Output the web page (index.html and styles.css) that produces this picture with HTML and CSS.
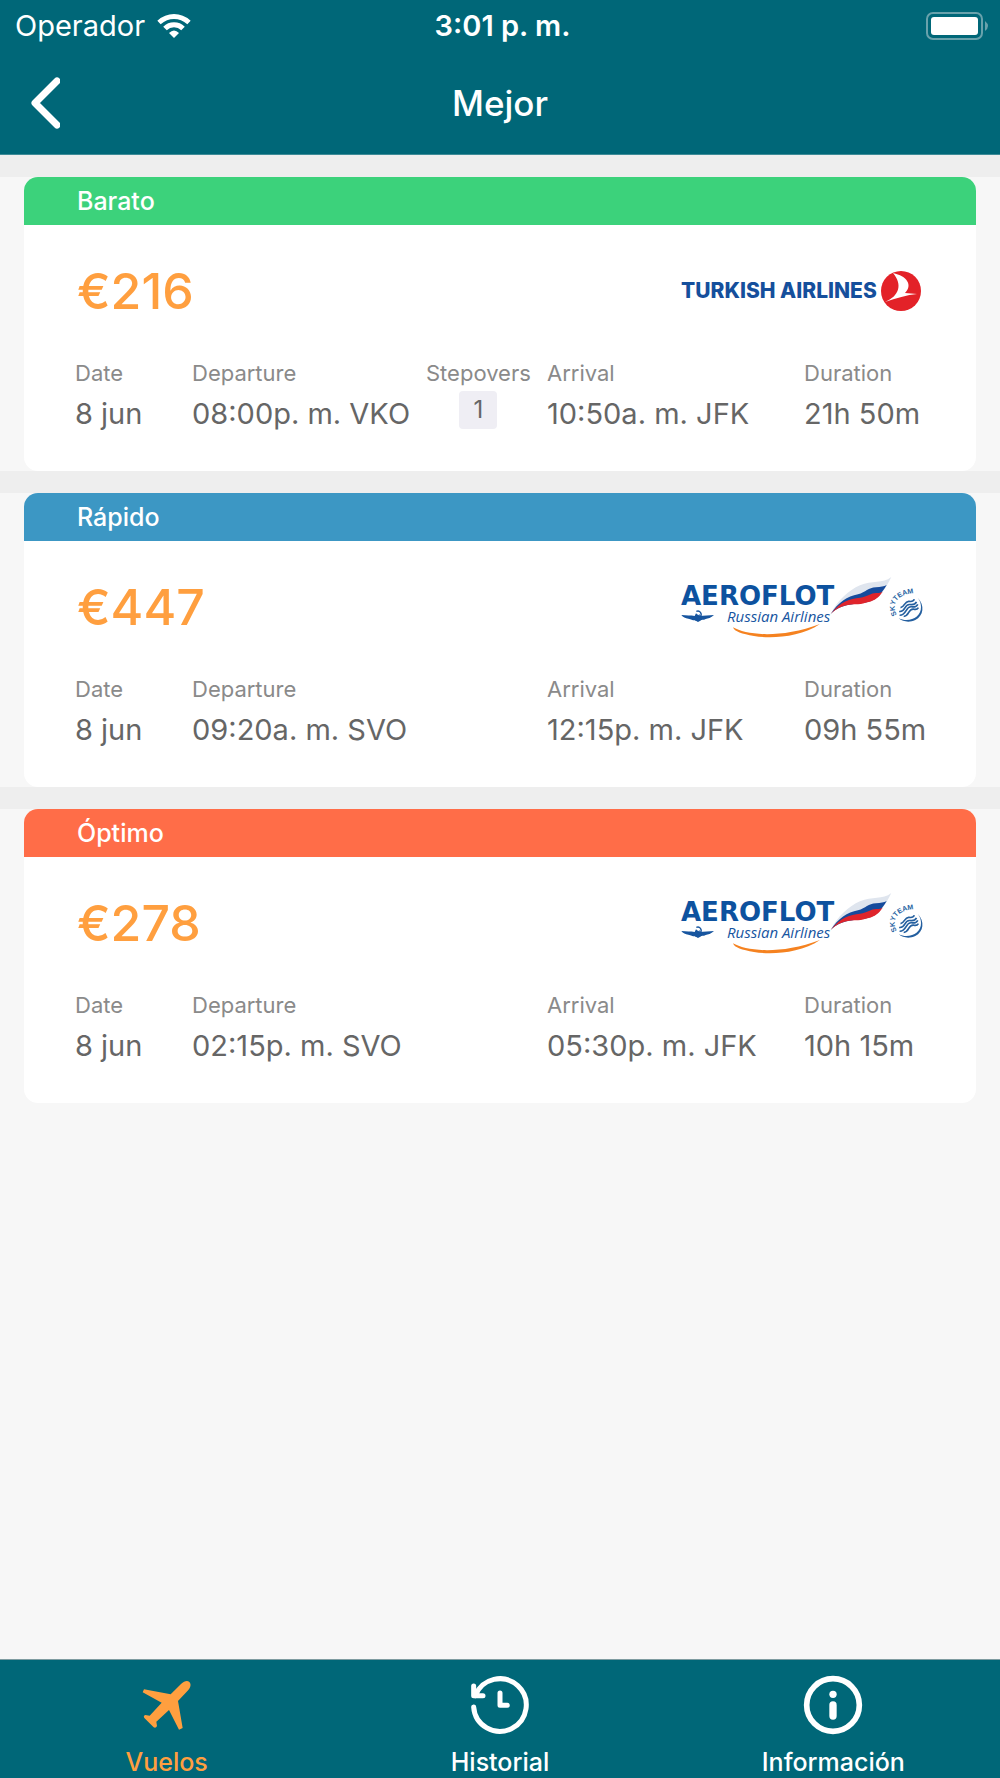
FILE: index.html
```html
<!DOCTYPE html>
<html lang="es">
<head>
<meta charset="utf-8">
<meta name="viewport" content="width=device-width, initial-scale=1">
<title>Mejor</title>
<link rel="stylesheet" href="styles.css">
</head>
<body>
<svg class="defs" aria-hidden="true">
  <symbol id="aeroflot" viewBox="0 0 280 90">
    <g transform="scale(.33333)">
      <path d="M64 168C80 170 92 168 104 171L108 163L118 171L162 168C153 177 144 178 137 180C130 184 125 181 121 185L114 189L105 184C96 184 94 180 85 179C76 177 69 175 64 168Z" fill="#17559f"/>
      <path d="M109 157C119 153 128 163 121 174M106 184L119 167" fill="none" stroke="#17559f" stroke-width="4"/>
      <path d="M219 205C260 229 363 239 480 195C420 236 331 239 282 231C246 225 223 218 219 205Z" fill="#f58220"/>
      <path d="M512 165C532 125 566 94 600 79C636 62 668 76 694 54C676 92 654 122 620 130C590 137 545 132 512 165Z" fill="#dfe5ee"/>
      <path d="M512 165C534 131 562 112 594 106C618 100 624 86 648 85C662 84 672 82 680 78C664 104 650 124 620 130C590 137 545 132 512 165Z" fill="#164b9c"/>
      <path d="M512 165C542 126 570 119 600 116C624 113 634 101 650 102C658 102 664 100 668 98C656 116 644 124 626 129C612 132 606 136 594 136C568 136 540 138 512 165Z" fill="#df242b"/>
      <path d="M773 116C795 139 791 170 766 183C747 192 729 188 716 178C748 193 784 174 783 144C783 134 780 125 773 116Z" fill="#245f9f"/>
      <path transform="rotate(-22 746 148)" d="M716 146C734 157 738 129 754 139C762 144 769 144 775 139M713 157C733 166 740 137 756 147C764 152 770 152 776 147M723 165C740 171 744 147 759 156C764 160 770 160 774 157M724 137C736 141 743 122 755 129C763 134 768 133 772 129" fill="none" stroke="#245f9f" stroke-width="5"/>
    </g>
  </symbol>
  <path id="sky-arc" d="M237 56C231 46 236 34 258 34" fill="none"/>
  <symbol id="turkish" viewBox="0 0 280 90">
    <circle cx="241" cy="48" r="20" fill="#e32228"/>
    <path d="M233 30C247 33 253 42 245 50L257 51C247 52 236 55 225 59C239 53 243 42 233 30Z" fill="#fff"/>
  </symbol>
</svg>

<header class="top">
  <div class="status">
    <div class="carrier">
      <span>Operador</span>
      <svg width="34" height="26" viewBox="0 0 34 26" aria-hidden="true">
        <path d="M2 9.500C11 1.500 23 1.500 32 9.500M8 15.500C13 10.500 21 10.500 26 15.500" fill="none" stroke="#fff" stroke-width="5"/>
        <path d="M12 20Q17 15 22 20L17 25Z" fill="#fff"/>
      </svg>
    </div>
    <time class="clock">3:01 p. m.</time>
    <svg class="battery" width="64" height="28" viewBox="0 0 64 28" role="img" aria-label="Batería">
      <rect x="1" y="1" width="55" height="26" rx="6" fill="none" stroke="#69a2ac" stroke-width="2"/>
      <rect x="5" y="5" width="47" height="18" rx="3" fill="#fff"/>
      <path d="M59 9Q65 14 59 19Z" fill="#69a2ac"/>
    </svg>
  </div>
  <div class="titlebar">
    <button class="back" type="button" aria-label="Atrás">
      <svg width="30" height="52" viewBox="0 0 30 52" aria-hidden="true"><path d="M27 4L5 26L27 48" fill="none" stroke="#fff" stroke-width="7" stroke-linecap="round" stroke-linejoin="round"/></svg>
    </button>
    <h1>Mejor</h1>
  </div>
</header>

<main>
  <section class="offer cheap">
    <article class="card">
      <h2>Barato</h2>
      <div class="summary">
        <p class="price">€216</p>
        <svg class="logo" viewBox="0 0 280 90">
          <use href="#turkish"/>
          <text class="turk-name" x="21" y="55">TURKISH AIRLINES</text>
        </svg>
      </div>
      <dl class="details">
        <div><dt>Date</dt><dd>8 jun</dd></div>
        <div><dt>Departure</dt><dd>08:00p. m. VKO</dd></div>
        <div class="stops"><dt>Stepovers</dt><dd>1</dd></div>
        <div class="arrival"><dt>Arrival</dt><dd>10:50a. m. JFK</dd></div>
        <div><dt>Duration</dt><dd>21h 50m</dd></div>
      </dl>
    </article>
  </section>
  <section class="offer fast">
    <article class="card">
      <h2>Rápido</h2>
      <div class="summary">
        <p class="price">€447</p>
        <svg class="logo" viewBox="0 0 280 90">
          <use href="#aeroflot"/>
          <text class="aero-name" x="21" y="46">AEROFLOT</text>
          <text class="aero-sub" x="67" y="63">Russian Airlines</text>
          <text class="sky-name"><textPath href="#sky-arc">SKYTEAM</textPath></text>
        </svg>
      </div>
      <dl class="details">
        <div><dt>Date</dt><dd>8 jun</dd></div>
        <div><dt>Departure</dt><dd>09:20a. m. SVO</dd></div>
        <div class="arrival"><dt>Arrival</dt><dd>12:15p. m. JFK</dd></div>
        <div><dt>Duration</dt><dd>09h 55m</dd></div>
      </dl>
    </article>
  </section>
  <section class="offer best">
    <article class="card">
      <h2>Óptimo</h2>
      <div class="summary">
        <p class="price">€278</p>
        <svg class="logo" viewBox="0 0 280 90">
          <use href="#aeroflot"/>
          <text class="aero-name" x="21" y="46">AEROFLOT</text>
          <text class="aero-sub" x="67" y="63">Russian Airlines</text>
          <text class="sky-name"><textPath href="#sky-arc">SKYTEAM</textPath></text>
        </svg>
      </div>
      <dl class="details">
        <div><dt>Date</dt><dd>8 jun</dd></div>
        <div><dt>Departure</dt><dd>02:15p. m. SVO</dd></div>
        <div class="arrival"><dt>Arrival</dt><dd>05:30p. m. JFK</dd></div>
        <div><dt>Duration</dt><dd>10h 15m</dd></div>
      </dl>
    </article>
  </section>
</main>

<nav class="tabs">
  <a class="active" href="#vuelos" aria-current="page">
    <svg viewBox="0 0 180 180" aria-hidden="true"><path transform="translate(-112,-105)" fill="currentColor" d="M133 148L213 163L244 132C254 122 264 121 269 126C275 132 274 142 264 152L235 183L249 264L238 269L208 210L170 245L172 258Q169 265 162 262L134 234Q130 227 137 225L150 227L186 188L129 157Z"/></svg>
    <span>Vuelos</span>
  </a>
  <a href="#historial">
    <svg viewBox="0 0 180 180" aria-hidden="true"><g fill="none" stroke="currentColor" stroke-width="15" stroke-linecap="round" stroke-linejoin="round"><path d="M11 96A79 79 0 1 0 16 62"/><path d="M11 33V62H39"/><path d="M90 54V91H112"/></g><path d="M8 37L35 64H8Z" fill="currentColor"/></svg>
    <span>Historial</span>
  </a>
  <a href="#informacion">
    <svg viewBox="0 0 180 180" aria-hidden="true"><circle cx="90" cy="90" r="79" fill="none" stroke="currentColor" stroke-width="17"/><circle cx="90" cy="58" r="11" fill="currentColor"/><path d="M90 90V123" stroke="currentColor" stroke-width="22" stroke-linecap="round"/></svg>
    <span>Información</span>
  </a>
</nav>
</body>
</html>
```
FILE: styles.css
```css
* { box-sizing: border-box; }

body {
  margin: 0;
  min-height: 100vh;
  display: flex;
  flex-direction: column;
  background: #f7f7f7;
  color: #666;
  font-family: Inter, "Liberation Sans", sans-serif;
}

h1, h2, p, dl, dd { margin: 0; }
svg { display: block; }
.defs { position: absolute; width: 0; height: 0; }

.top {
  background: #006778;
  color: #fff;
  border-bottom: 1px solid #3d8b97;
}

.status {
  display: grid;
  grid-template-columns: 1fr auto 1fr;
  align-items: center;
  height: 51px;
  padding: 0 10px 0 15px;
  font-size: 29px;
}
.carrier { display: flex; align-items: center; gap: 12px; }
.clock { font-weight: 600; }
.battery { justify-self: end; }

.titlebar {
  display: grid;
  grid-template-columns: 1fr auto 1fr;
  align-items: center;
  height: 103px;
  padding: 0 30px;
}
.back {
  justify-self: start;
  padding: 0;
  border: 0;
  background: none;
  cursor: pointer;
}
.titlebar h1 { font-size: 35px; font-weight: 500; }

.offer {
  padding: 0 24px;
  border-top: 22px solid #eee;
}
.card {
  overflow: hidden;
  padding-bottom: 30px;
  border-radius: 14px;
  background: #fff;
}
.card h2 {
  padding: 0 53px;
  color: #fff;
  font-size: 25px;
  font-weight: 500;
  line-height: 48px;
}
.cheap h2 { background: #3cd27b; }
.fast h2 { background: #3c97c4; }
.best h2 { background: #ff6d48; }

.summary {
  display: flex;
  justify-content: space-between;
  align-items: center;
  padding: 18px 36px 0 53px;
}
.price {
  padding-top: 6px;
  color: #ff9f3f;
  font-size: 50px;
  font-weight: 500;
}
.logo { width: 280px; height: 90px; }

.details {
  display: grid;
  grid-template-columns: 117fr 234fr 121fr 257fr 150fr;
  margin-top: 26px;
  padding: 0 22px 0 51px;
  white-space: nowrap;
}
.details > div { min-width: 0; }
.details dt { color: #8a8a8a; font-size: 22px; line-height: 28px; }
.details dd { font-size: 29px; line-height: 54px; }
.arrival { grid-column: 4; }
.stops { justify-self: start; }
.stops dd {
  width: 38px;
  margin: 4px auto 0;
  border-radius: 4px;
  background: #efeef4;
  font-size: 24px;
  line-height: 38px;
  text-align: center;
}

.tabs {
  display: grid;
  grid-template-columns: repeat(3, 1fr);
  margin-top: auto;
  padding: 15px 0 2px;
  border-top: 1px solid #7f9ca1;
  background: #006778;
}
.tabs a {
  display: flex;
  flex-direction: column;
  align-items: center;
  gap: 13px;
  color: #fff;
  font-size: 25px;
  font-weight: 500;
  line-height: 28px;
  text-decoration: none;
}
.tabs .active { color: #ff9f3f; }
.tabs svg { width: 60px; height: 60px; }

.aero-name { fill: #0d529f; font: bold 26px "DejaVu Sans", sans-serif; }
.aero-sub { fill: #17559f; font: italic 15px "Open Sans", sans-serif; }
.sky-name { fill: #245f9f; font: bold 7px "Liberation Sans", sans-serif; }
.turk-name { fill: #154f9c; font: 800 21px Inter, sans-serif; }
```
